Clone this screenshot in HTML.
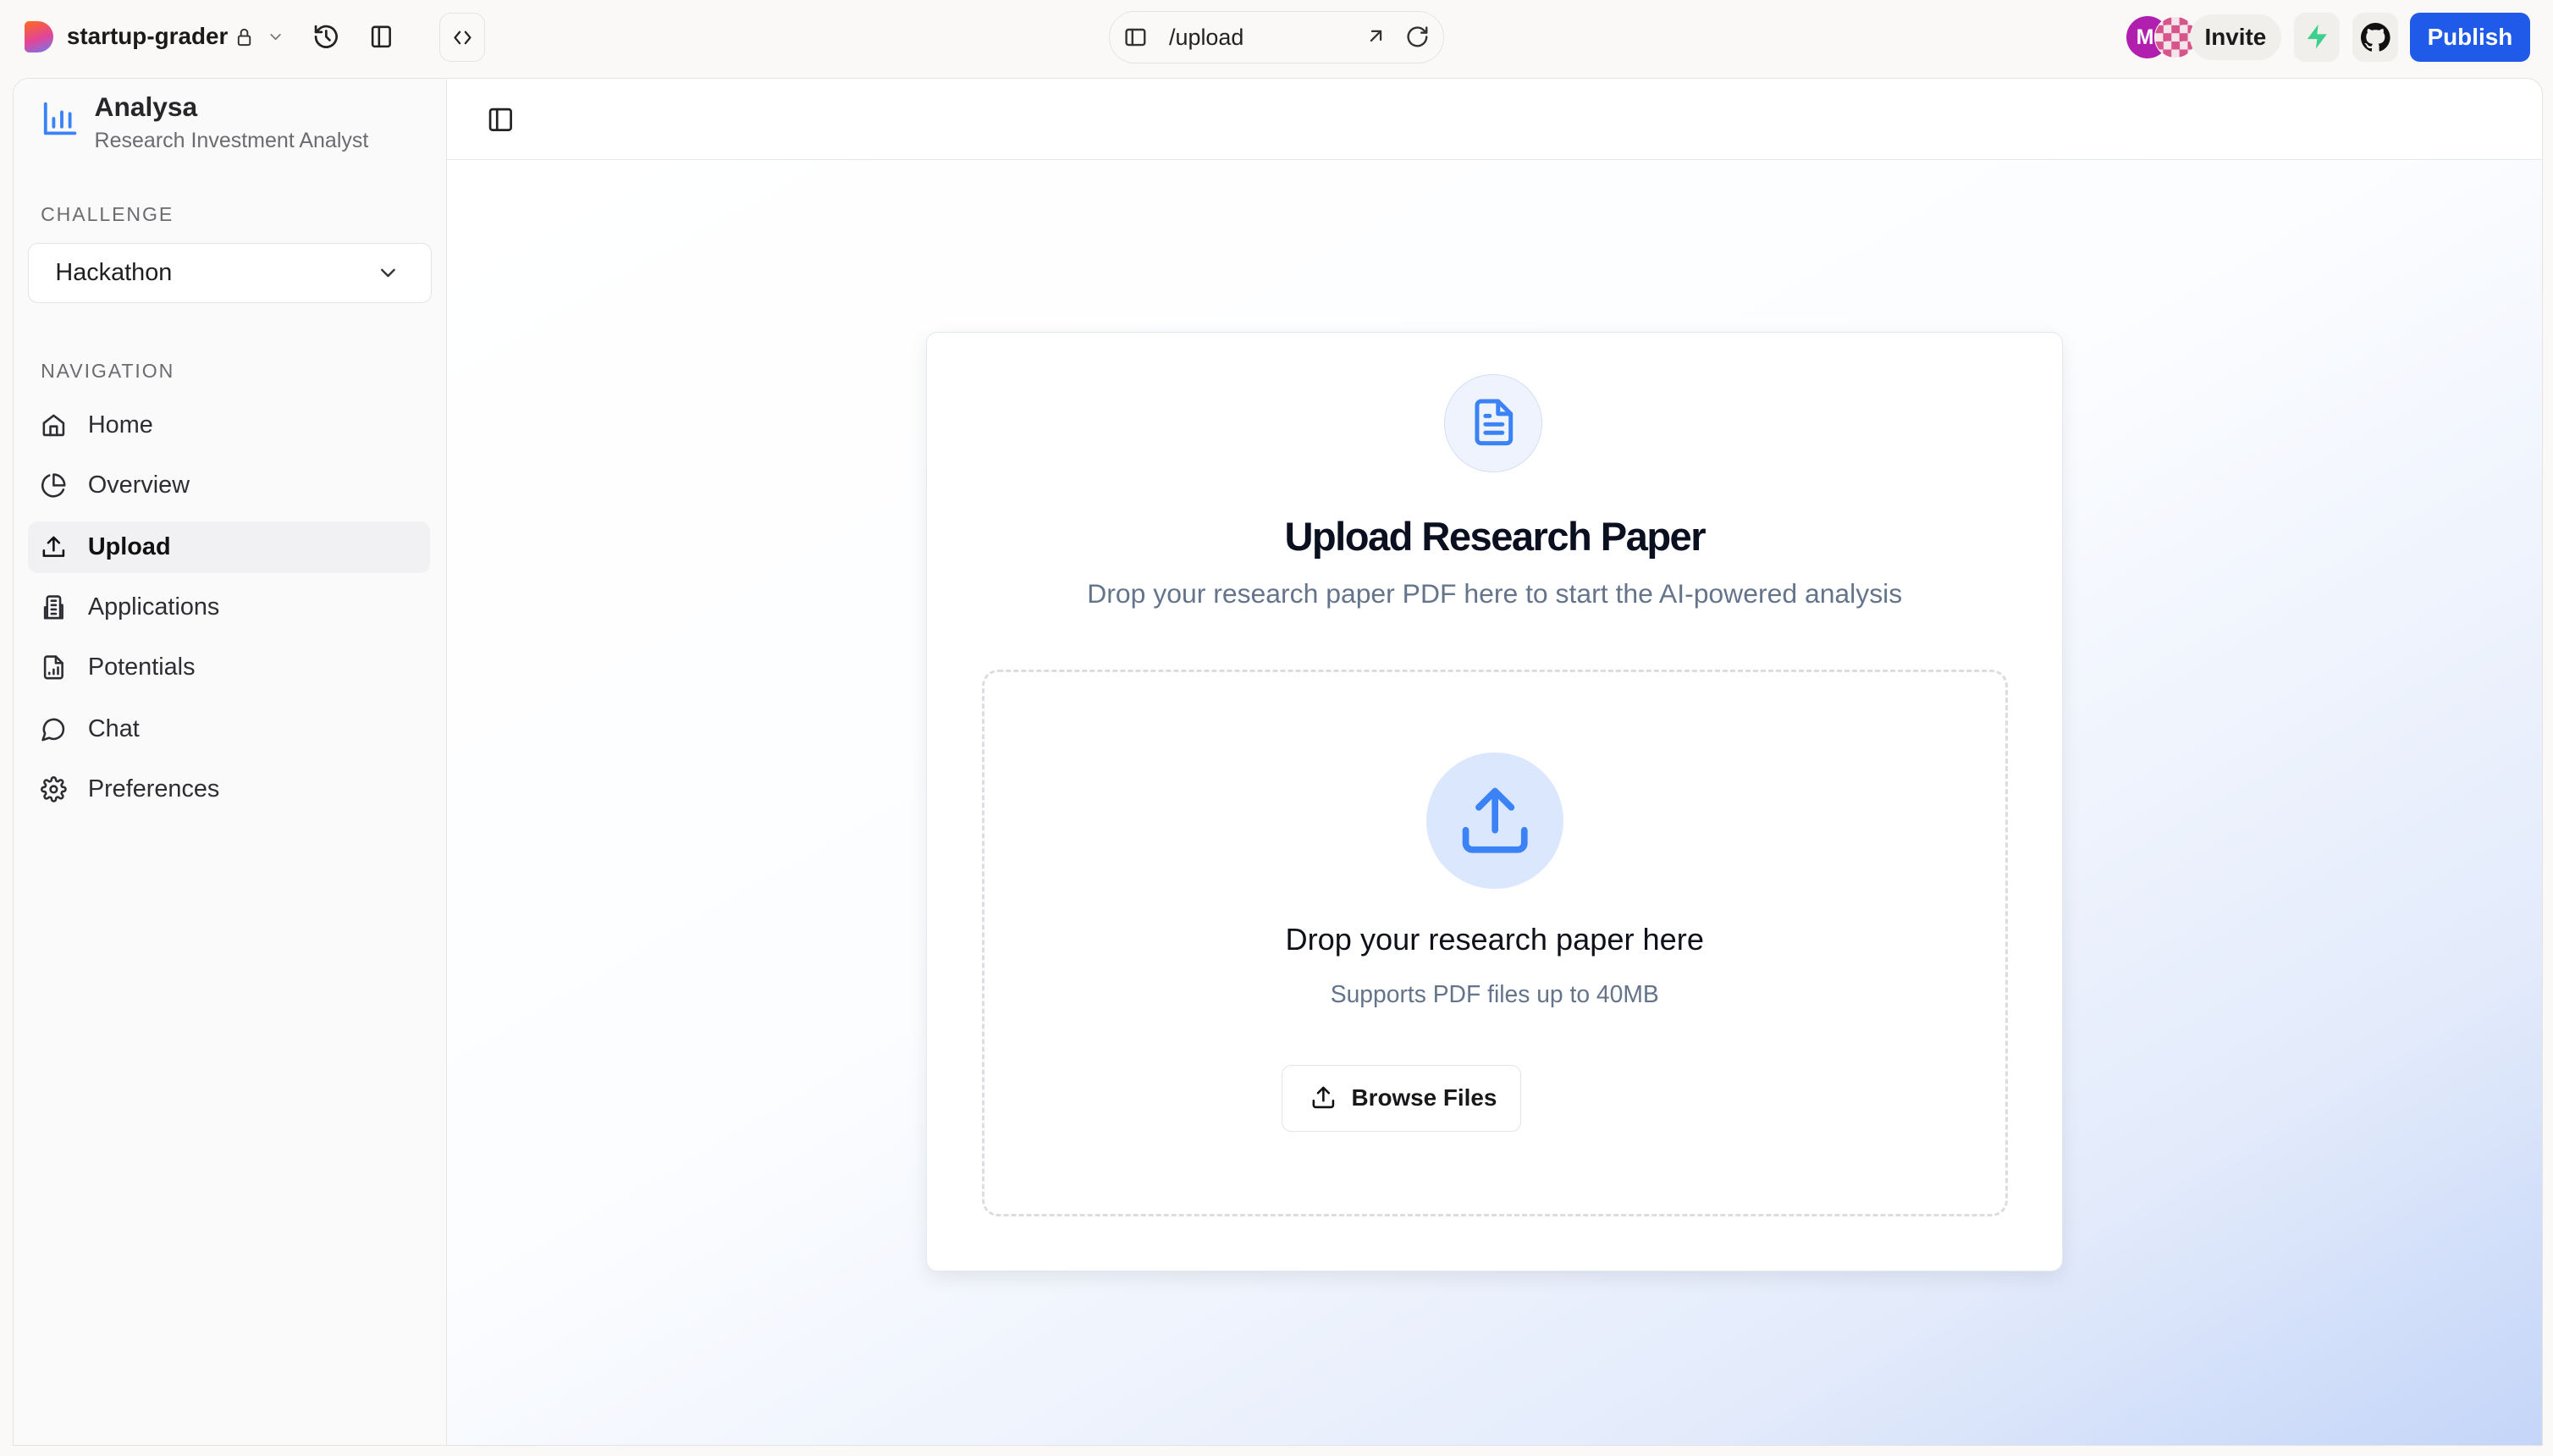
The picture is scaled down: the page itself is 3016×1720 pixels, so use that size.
<!DOCTYPE html>
<html><head><meta charset="utf-8"><style>
*{box-sizing:border-box;margin:0;padding:0}
html,body{width:3016px;height:1720px;overflow:hidden;background:#faf9f7}
#r{zoom:1.92347;width:1568px;height:894px;position:relative;font-family:"Liberation Sans",sans-serif;color:#1f2937;background:#faf9f7}
.a{position:absolute}
svg{display:block}
.ic{fill:none;stroke:currentColor;stroke-width:2;stroke-linecap:round;stroke-linejoin:round}
.nav{position:absolute;left:17px;width:247px;height:32px;display:flex;align-items:center;font-size:15px;color:#2d2d33}
.nav svg{margin-left:8px;margin-right:13px}
.sel{background:#f1f1f3;border-radius:6px;font-weight:bold;color:#111}
</style></head><body><div id="r">
<!-- top bar -->
<div class="a" style="left:15px;top:13px;width:18px;height:19px;border-radius:3px 10px 10px 3px;background:linear-gradient(160deg,#ff6a1a,#e2459a 55%,#6b7cf0)"></div>
<div class="a" style="left:41px;top:14px;font-size:14.5px;font-weight:bold;color:#1a1a1a">startup-grader</div>
<svg class="a ic" style="left:144px;top:16px;color:#333" width="12" height="13" viewBox="0 0 24 24" stroke-width="2"><rect x="5" y="11" width="14" height="11" rx="2"/><path d="M8 11V7a4 4 0 0 1 8 0v4"/></svg>
<svg class="a ic" style="left:164px;top:17px;color:#777" width="11" height="11" viewBox="0 0 24 24"><path d="M6 9l6 6 6-6"/></svg>
<svg class="a ic" style="left:192px;top:14px;color:#222" width="17" height="17" viewBox="0 0 24 24"><path d="M3 12a9 9 0 1 0 3-6.7L3 8"/><path d="M3 3v5h5"/><path d="M12 7v5l3 3"/></svg>
<svg class="a ic" style="left:226px;top:14px;color:#222" width="16" height="17" viewBox="0 0 24 24"><rect x="4" y="3" width="16" height="18" rx="2"/><path d="M10 3v18"/></svg>
<div class="a" style="left:270px;top:8px;width:28px;height:30px;border:1px solid #e6e4e0;border-radius:7px"></div>
<svg class="a ic" style="left:277px;top:16px;color:#222" width="14" height="14" viewBox="0 0 24 24" stroke-width="1.8"><path d="M9 6l-5 6 5 6M15 6l5 6-5 6"/></svg>
<div class="a" style="left:681px;top:7px;width:206px;height:32px;border:1px solid #e6e4e0;border-radius:16px;background:#faf9f7"></div>
<svg class="a ic" style="left:690px;top:15px;color:#333" width="15" height="15" viewBox="0 0 24 24"><rect x="3" y="5" width="18" height="15" rx="2"/><path d="M9 5v15"/></svg>
<div class="a" style="left:718px;top:15px;font-size:14px;color:#222">/upload</div>
<svg class="a ic" style="left:838px;top:15px;color:#333" width="14" height="14" viewBox="0 0 24 24"><path d="M7 17L17 7M8 7h9v9"/></svg>
<svg class="a ic" style="left:863px;top:15px;color:#333" width="15" height="15" viewBox="0 0 24 24"><path d="M21 12a9 9 0 1 1-3-6.7L21 8"/><path d="M21 3v5h-5"/></svg>
<div class="a" style="left:1306px;top:10px;width:26px;height:26px;border-radius:50%;background:#b01fae;color:#fff;font-size:13px;font-weight:bold;line-height:26px;padding-left:6px">M</div>
<div class="a" style="left:1323px;top:10px;width:26px;height:26px;border-radius:50%;background:repeating-conic-gradient(#d6558a 0 25%,#f3e5ea 0 50%) 0 0/10px 10px;border:1px solid #fff"></div>
<div class="a" style="left:1345px;top:9px;width:56px;height:28px;border-radius:14px;background:#f1efeb;font-size:14.5px;font-weight:bold;line-height:28px;text-align:center;color:#1a1a1a">Invite</div>
<div class="a" style="left:1409px;top:8px;width:28px;height:30px;border-radius:7px;background:#f1efeb"></div>
<svg class="a" style="left:1414px;top:13px" width="18" height="19" viewBox="0 0 24 24"><path d="M13 2L4 14h8l-1 8 9-12h-8z" fill="#3ecf8e"/></svg>
<div class="a" style="left:1445px;top:8px;width:28px;height:30px;border-radius:7px;background:#f1efeb"></div>
<svg class="a" style="left:1450px;top:14px" width="18" height="18" viewBox="0 0 16 16"><path fill="#111" d="M8 0C3.6 0 0 3.6 0 8c0 3.5 2.3 6.5 5.5 7.6.4.1.5-.2.5-.4v-1.4c-2.2.5-2.7-1-2.7-1-.4-.9-.9-1.2-.9-1.2-.7-.5.1-.5.1-.5.8.1 1.2.8 1.2.8.7 1.2 1.9.9 2.3.7.1-.5.3-.9.5-1.1-1.8-.2-3.6-.9-3.6-4 0-.9.3-1.6.8-2.100-.1-.2-.4-1 .1-2.1 0 0 .7-.2 2.2.8.6-.2 1.3-.3 2-.3s1.4.1 2 .3c1.5-1 2.2-.8 2.2-.8.4 1.1.2 1.9.1 2.1.5.6.8 1.3.8 2.1 0 3.1-1.9 3.7-3.6 3.9.3.3.5.8.5 1.5v2.2c0 .2.1.5.6.4C13.7 14.5 16 11.5 16 8c0-4.4-3.6-8-8-8z"/></svg>
<div class="a" style="left:1480px;top:8px;width:74px;height:30px;border-radius:6px;background:#1f5ae8;color:#fff;font-size:14.5px;font-weight:bold;line-height:30px;text-align:center">Publish</div>

<!-- panel -->
<div class="a" style="left:8px;top:48px;width:1554px;height:840px;border:1px solid #e5e4e2;border-radius:10px 10px 0 0;overflow:hidden;background:#fff">
 <div class="a" style="left:0;top:0;width:266px;height:840px;background:#fafafa;border-right:1px solid #e5e5e5"></div>
 <div class="a" style="left:266px;top:50px;width:1288px;height:790px;background:linear-gradient(150deg,#ffffff 0%,#fcfdff 45%,#e3ebfb 80%,#c4d5f8 100%)"></div>
 <div class="a" style="left:266px;top:49px;width:1288px;height:1px;background:#e5e7eb"></div>
</div>
<!-- sidebar -->
<svg class="a ic" style="left:25px;top:61px;color:#3b82f6" width="24" height="24" viewBox="0 0 24 24"><path d="M3 3v18h18"/><path d="M8 17v-5M13 17V8M18 17v-8"/></svg>
<div class="a" style="left:58px;top:56px;font-size:16.5px;font-weight:bold;color:#27272a">Analysa</div>
<div class="a" style="left:58px;top:79px;font-size:13px;color:#6b6b70">Research Investment Analyst</div>
<div class="a" style="left:25px;top:125px;font-size:12px;letter-spacing:1px;color:#6b6b70">CHALLENGE</div>
<div class="a" style="left:17px;top:149px;width:248px;height:37px;border:1px solid #e4e4e7;border-radius:6px;background:#fff"></div>
<div class="a" style="left:34px;top:159px;font-size:15px;color:#1f1f23">Hackathon</div>
<svg class="a ic" style="left:231px;top:160px;color:#333" width="15" height="15" viewBox="0 0 24 24"><path d="M6 9l6 6 6-6"/></svg>
<div class="a" style="left:25px;top:221px;font-size:12px;letter-spacing:1px;color:#6b6b70">NAVIGATION</div>
<div class="nav" style="top:245px"><svg class="ic" width="16" height="16" viewBox="0 0 24 24"><path d="M3 10l9-7 9 7v10a1 1 0 0 1-1 1H4a1 1 0 0 1-1-1z"/><path d="M9 21v-8h6v8"/></svg>Home</div>
<div class="nav" style="top:282px"><svg class="ic" width="16" height="16" viewBox="0 0 24 24"><path d="M21 15.9A10 10 0 1 1 8 2.8"/><path d="M22 12A10 10 0 0 0 12 2v10z"/></svg>Overview</div>
<div class="nav sel" style="top:320px"><svg class="ic" width="16" height="16" viewBox="0 0 24 24"><path d="M21 15v5H3v-5"/><path d="M17 8l-5-5-5 5M12 3v12"/></svg>Upload</div>
<div class="nav" style="top:357px"><svg class="ic" width="16" height="16" viewBox="0 0 24 24"><path d="M6 22V4a2 2 0 0 1 2-2h8a2 2 0 0 1 2 2v18z"/><path d="M6 12H4v10h16V10h-2M10 6h4M10 10h4M10 14h4M10 18h4"/></svg>Applications</div>
<div class="nav" style="top:394px"><svg class="ic" width="16" height="16" viewBox="0 0 24 24"><path d="M14 2H6a2 2 0 0 0-2 2v16a2 2 0 0 0 2 2h12a2 2 0 0 0 2-2V8z"/><path d="M14 2v6h6M8 18v-1M12 18v-4M16 18v-6"/></svg>Potentials</div>
<div class="nav" style="top:432px"><svg class="ic" width="16" height="16" viewBox="0 0 24 24"><path d="M7.9 20A9 9 0 1 0 4 16.1L2 22z"/></svg>Chat</div>
<div class="nav" style="top:469px"><svg class="ic" width="16" height="16" viewBox="0 0 24 24"><circle cx="12" cy="12" r="3"/><path d="M19.4 15a1.7 1.7 0 0 0 .3 1.8l.1.1a2 2 0 1 1-2.8 2.8l-.1-.1a1.7 1.7 0 0 0-1.8-.3 1.7 1.7 0 0 0-1 1.5V21a2 2 0 1 1-4 0v-.1a1.7 1.7 0 0 0-1.1-1.5 1.7 1.7 0 0 0-1.8.3l-.1.1a2 2 0 1 1-2.8-2.8l.1-.1a1.7 1.7 0 0 0 .3-1.8 1.7 1.7 0 0 0-1.500-1H3a2 2 0 1 1 0-4h.1a1.7 1.7 0 0 0 1.5-1.1 1.7 1.7 0 0 0-.3-1.8l-.1-.1a2 2 0 1 1 2.8-2.8l.1.1a1.7 1.7 0 0 0 1.8.3H9a1.7 1.7 0 0 0 1-1.5V3a2 2 0 1 1 4 0v.1a1.7 1.7 0 0 0 1 1.5 1.7 1.7 0 0 0 1.8-.3l.1-.1a2 2 0 1 1 2.8 2.8l-.1.1a1.7 1.7 0 0 0-.3 1.8V9a1.7 1.7 0 0 0 1.5 1H21a2 2 0 1 1 0 4h-.1a1.7 1.7 0 0 0-1.5 1z"/></svg>Preferences</div>
<svg class="a ic" style="left:299px;top:65px;color:#222" width="17" height="17" viewBox="0 0 24 24"><rect x="3" y="3" width="18" height="18" rx="2"/><path d="M9 3v18"/></svg>

<!-- card -->
<div class="a" style="left:569px;top:204px;width:698px;height:577px;background:#fff;border:1px solid #e2e8f0;border-radius:7px;box-shadow:0 4px 12px rgba(0,0,0,.08)"></div>
<div class="a" style="left:887px;top:230px;width:60px;height:60px;border-radius:50%;background:#eef3fd;border:1px solid #d4def5"></div>
<svg class="a ic" style="left:902px;top:244px;color:#3b82f6" width="31" height="31" viewBox="0 0 24 24" stroke-width="2.2"><path d="M14 2H6a2 2 0 0 0-2 2v16a2 2 0 0 0 2 2h12a2 2 0 0 0 2-2V8z"/><path d="M14 2v6h6M16 13H8M16 17H8M10 9H8"/></svg>
<div class="a" style="left:569px;top:315px;width:698px;text-align:center;font-size:24.5px;font-weight:bold;letter-spacing:-0.8px;color:#0b1020">Upload Research Paper</div>
<div class="a" style="left:569px;top:355px;width:698px;text-align:center;font-size:16.6px;color:#64748b">Drop your research paper PDF here to start the AI-powered analysis</div>
<div class="a" style="left:603px;top:411px;width:630px;height:336px;border:2px dashed #dcdde1;border-radius:10px"></div>
<div class="a" style="left:876px;top:462px;width:84px;height:84px;border-radius:50%;background:#dbe7fd"></div>
<svg class="a ic" style="left:894px;top:480px;color:#3b82f6" width="48" height="48" viewBox="0 0 24 24" stroke-width="2"><path d="M21 15v4a2 2 0 0 1-2 2H5a2 2 0 0 1-2-2v-4"/><path d="M17 8l-5-5-5 5M12 3v12"/></svg>
<div class="a" style="left:569px;top:566px;width:698px;text-align:center;font-size:18.8px;color:#0f111a">Drop your research paper here</div>
<div class="a" style="left:569px;top:602px;width:698px;text-align:center;font-size:14.7px;color:#64748b">Supports PDF files up to 40MB</div>
<div class="a" style="left:787px;top:654px;width:147px;height:41px;border:1px solid #e4e4e7;border-radius:6px;background:#fff"></div>
<svg class="a ic" style="left:805px;top:666px;color:#111" width="16" height="16" viewBox="0 0 24 24"><path d="M21 15v4a2 2 0 0 1-2 2H5a2 2 0 0 1-2-2v-4"/><path d="M17 8l-5-5-5 5M12 3v12"/></svg>
<div class="a" style="left:830px;top:666px;font-size:14.5px;font-weight:bold;color:#18181b">Browse Files</div>
</div></body></html>
